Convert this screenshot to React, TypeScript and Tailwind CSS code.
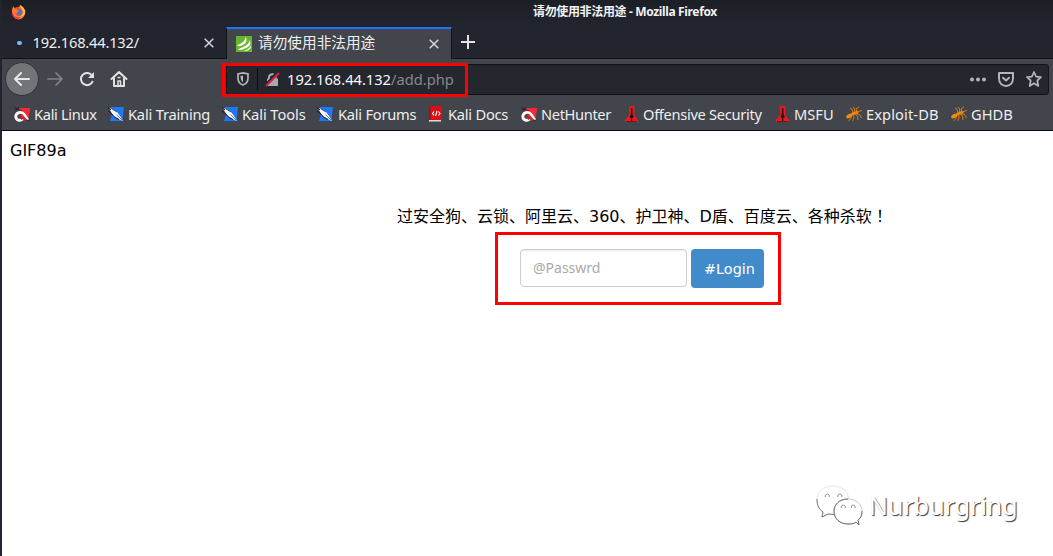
import type { ReactNode } from "react";

function KaliMark({ red = false }: { red?: boolean }) {
  return red ? (
    <svg width="16" height="16" viewBox="0 0 16 16" className="shrink-0">
      <path d="M5 2H16V4L14 14L5 5Z" fill="#f12a35" />
      <path d="M0 1L3 3L5 1M1 4L4 3M4 3L8 5" stroke="#20242b" strokeWidth="1" fill="none" />
      <path d="M14 14.3L10 8.3C7.5 4.8 1.8 6.3 1.8 10.6C1.8 14.4 6.3 15.2 8.8 13" fill="none" stroke="#fff" strokeWidth="2.8" />
      <path d="M5 10L8.5 13.2" stroke="#c51f2a" strokeWidth="2.2" />
      <path d="M7 8.5L12.5 14.5" stroke="#e22a37" strokeWidth="2" />
      <path d="M12 14.5L15.5 14" stroke="#20242b" strokeWidth="1" />
    </svg>
  ) : (
    <svg width="16" height="16" viewBox="0 0 16 16" className="shrink-0">
      <path d="M3 1H16L14.5 15H2L4 8Z" fill="#2277f3" />
      <path d="M1 2L4 3L9 6L12 10L15 15L10.5 13L6 10.5L3 6Z" fill="#f5f6f7" />
      <path d="M0 1.5L3 4M0 5L3.5 7.5L6.5 11L11 13.5" stroke="#15191e" strokeWidth="1" fill="none" />
      <path d="M8.5 8.5L14 14" stroke="#59616b" strokeWidth=".8" />
      <path d="M4 3L9 6" stroke="#15191e" strokeWidth=".6" />
    </svg>
  );
}

function DocsMark() {
  return (
    <svg width="13" height="16" viewBox="0 0 13 16" className="shrink-0">
      <path d="M0 0H13V14H0Z" fill="#d90f16" />
      <path d="M0 0H1.5V14H0Z" fill="#a80c12" />
      <path d="M0 14H12V15.5H0Z" fill="#e5d8d8" />
      <path d="M5 5.5L3.5 7.5L5 9.5M8 5L6.6 10M9.5 5.5L11 7.5L9.5 9.5" stroke="#fff" strokeWidth="1.1" fill="none" />
    </svg>
  );
}

function OffsecMark() {
  return (
    <svg width="13" height="16" viewBox="0 0 13 16" className="shrink-0">
      <path d="M4 0H9.5V9L13 14V16H0V14L4 9Z" fill="#e01c20" />
      <path d="M6 2H7.3L7.6 9L9 11L7.2 12V15H6V12L4.5 11L5.7 9Z" fill="#330a0a" />
      <path d="M1 15.5H12" stroke="#8d0c10" />
    </svg>
  );
}

function AntMark() {
  return (
    <svg width="16" height="16" viewBox="0 0 16 16" className="shrink-0" fill="none" stroke="#e9860f">
      <ellipse cx="3.3" cy="10" rx="3.4" ry="2" fill="#f08a10" stroke="none" transform="rotate(-28 3.3 10)" />
      <ellipse cx="7.5" cy="7.6" rx="2.6" ry="1.4" fill="#ef890e" stroke="none" transform="rotate(-24 7.5 7.6)" />
      <circle cx="10.7" cy="6.6" r="1.8" fill="#e9860f" stroke="none" />
      <path d="M11 6L10 3L13 .8M11.5 6L16 4.3M7 7L5.8 3L4 2M8 7L8.8 3L7 1M6 8L4.6 13L2.4 15M7.5 8L8 12L6.5 15M9 8L11.5 10L12 14M10.5 7.5L14 9L15.5 12" strokeWidth=".85" />
    </svg>
  );
}

function FirefoxMark() {
  return (
    <svg width="15" height="15" viewBox="0 0 15 15">
      <circle cx="7.5" cy="8" r="6.3" fill="#f9443d" />
      <path d="M1 6C1 3 2.2 2 2.5 1.3L4.2 4L7 4.5L4.5 8C4.5 10 6 11 8 11C11 11 12 8 11 5L8 3L9 0C12 1.5 14.7 5 14 9C13 12 11 14 7.5 14.4C3 14 .5 10 1 6Z" fill="#ff7a2a" />
      <path d="M8.8 0C9 3 12 3.4 12 7C12 9.5 10.5 11 8.8 11.5C12.5 12 14.5 9 14.2 6C13.5 3 11 1.3 8.8 0Z" fill="#ffc23e" />
      <circle cx="7.8" cy="7.2" r="3" fill="#4376c5" />
      <path d="M3 4.3L6.5 5L8 6L6.3 7L5.5 9L3.5 7Z" fill="#ff762c" />
      <path d="M1.3 8C2 12 5 13.5 8 13" stroke="#e82054" strokeWidth="1.3" fill="none" />
    </svg>
  );
}

function Cross() {
  return (
    <svg width="10" height="10" viewBox="0 0 10 10" className="shrink-0" stroke="#d7d7db" strokeWidth="1.5">
      <path d="M.7.7L9.3 9.3M9.3.7L.7 9.3" />
    </svg>
  );
}

function Bookmark({ icon, label, width, gap, tracking = "tracking-normal" }: { icon: ReactNode; label: string; width: string; gap: string; tracking?: string }) {
  return (
    <div className={`flex shrink-0 items-center ${width} ${gap}`}>
      {icon}
      <span className={`whitespace-nowrap ${tracking}`}>{label}</span>
    </div>
  );
}

function WechatMark() {
  return (
    <svg width="48" height="42" viewBox="0 0 48 42" fill="#fff" strokeWidth=".8">
      <path d="M17 1C7 1 1 7 1 15C1 21 3 24 7 27L6 32L12 29C15 30 19 30 23 29C31 27 34 21 33 14C32 6 25 1 17 1Z" stroke="#dedede" />
      <path d="M1 14C1 21 3 24 7 27L6 32L12 29L18 29.5" stroke="#555" fill="none" />
      <path d="M32 14C23 14 18 20 18 26C18 34 24 39 32 39C35 39 38 39 40 37L43 40L42 35C45 33 46 30 46 26C46 19 40 14 32 14Z" stroke="#bbb" />
      <path d="M32 14C23 14 18 20 18 26C18 34 24 39 32 39C35 39 38 39 40 37L43 40L42 35C45 33 46 30 46 26" stroke="#555" fill="none" />
      <path d="M9.5 12A2 2 0 1 1 13 12M22 12A2 2 0 1 1 25.5 12M25.5 23A2 2 0 1 1 29 23M35.5 23A2 2 0 1 1 39 23" stroke="#777" fill="none" />
    </svg>
  );
}

export default function App() {
  return (
    <div className="relative flex h-[556px] w-[1053px] flex-col overflow-hidden bg-[#22252e] pl-[2px] font-['Noto_Sans','Noto_Sans_CJK_SC',sans-serif]">
      <header className="flex h-[27px] shrink-0 items-start bg-linear-to-b from-[#1c1f26] to-[#22252e]">
        <div className="ml-[9px] mt-[5px] w-[522px]"><FirefoxMark /></div>
        <div className="mt-[3px] whitespace-nowrap text-[12px] leading-[17px] font-bold tracking-[-0.35px] text-[#f1f1f2]">请勿使用非法用途 - Mozilla Firefox</div>
      </header>

      <div className="flex h-8 shrink-0 border-b border-[#101218] text-[14.67px] text-[#eeeef0]">
        <div className="flex w-[224px] items-center pl-[15px]">
          <span className="h-1 w-[5px] rounded-full bg-[#75baff]" />
          <span className="-mt-[2px] ml-[10.5px] w-[171.5px] whitespace-nowrap tracking-[-0.2px]">192.168.44.132/</span>
          <Cross />
        </div>
        <div className="-mb-px flex w-[226px] items-center border-x border-t-2 border-x-[#101218] border-t-[#1e75ff] bg-[#42454b] pb-px pl-[9px]">
          <svg width="16" height="16" viewBox="0 0 16 16" className="shrink-0">
            <path d="M0 0H16V16H0Z" fill="#69b52d" />
            <path d="M1 9.5C5 7.5 9 6 9.5 1C12 4.5 10 8 6 9.5C4 10.2 2 10.5 1 9.5ZM2 13.2C7 11 13 9.5 13.5 4C16 8 13 11.5 8 13C5 14 3 14.5 2 13.2ZM7 15.2C11 14 13.5 12.5 15 9.5C15.5 13 12 15.5 7 15.2Z" fill="#fff" />
          </svg>
          <span className="-mt-[3px] ml-[6px] w-[171px] whitespace-nowrap">请勿使用非法用途</span>
          <Cross />
        </div>
        <div className="flex items-start pl-[9px] pt-2">
          <svg width="14" height="14" viewBox="0 0 14 14" stroke="#e5e5e6" strokeWidth="2"><path d="M7 0V14M0 7H14" /></svg>
        </div>
      </div>

      <nav className="flex h-[41px] shrink-0 items-center bg-[#42454b] pb-px pl-1">
        <div className="-ml-px flex size-[34px] shrink-0 items-center justify-center rounded-full border border-[#303238] bg-[#737477]">
          <svg width="16" height="14" viewBox="0 0 16 14" fill="none" stroke="#e7e7e8" strokeWidth="2" strokeLinecap="round" strokeLinejoin="round"><path d="M15 7H1M7 1L1 7L7 13" /></svg>
        </div>
        <svg width="16" height="14" viewBox="0 0 16 14" className="ml-2" fill="none" stroke="#808286" strokeWidth="1.7" strokeLinecap="round" strokeLinejoin="round"><path d="M1 7H15M9 1L15 7L9 13" /></svg>
        <svg width="16" height="16" viewBox="0 0 16 16" className="ml-4" fill="none" stroke="#e2e2e3" strokeWidth="2">
          <path d="M13.2 4.8A6.1 6.1 0 1 0 13.8 10" /><path d="M15 1V7H9Z" fill="#e2e2e3" stroke="none" />
        </svg>
        <svg width="18" height="18" viewBox="0 0 18 18" className="ml-[15px]" fill="none" stroke="#e2e2e3" strokeWidth="2" strokeLinejoin="round">
          <path d="M1.5 9L9 2L16.5 9M4 8V16H14V8" strokeLinecap="round" /><path d="M8 16V11H10.5V16" strokeWidth="1.5" /><path d="M7.5 7.5H10.5" strokeWidth="1.5" />
        </svg>
        <div className="ml-[98px] flex h-[31px] w-[823px] items-center rounded-[3px] border border-[#111319] bg-[#25272f] pl-[10px]">
          <svg width="12" height="14" viewBox="0 0 12 14" fill="none" stroke="#b5b5b9" strokeWidth="1.7" className="shrink-0"><path d="M6 .9L11 2V6C11 10 9 12 6 13C3 12 1 10 1 6V2Z" /><path d="M6 3.4V10.2C4.3 9 3.5 7.6 3.5 4Z" fill="#b5b5b9" stroke="none" /></svg>
          <span className="ml-2 h-[22px] w-px shrink-0 bg-[#0c0d12]" />
          <svg width="15" height="15" viewBox="0 0 15 15" className="ml-[7px] shrink-0">
            <path d="M4 7V5A3.3 3.3 0 0 1 10.5 5V7" fill="none" stroke="#aaa9ad" strokeWidth="2" />
            <path d="M2 6.5H13V14H2Z" fill="#aaa9ad" /><path d="M0 14L13 0" stroke="#25272f" strokeWidth="3" /><path d="M1 14L14 1" stroke="#e41b45" strokeWidth="1.8" />
          </svg>
          <div className="ml-[7px] whitespace-nowrap text-[14.67px] text-[#f8f8fa]">192.168.44.132<span className="text-[#87888c]">/add.php</span></div>
          <div className="ml-auto mr-[6px] flex items-center">
            <svg width="16" height="5" viewBox="0 0 16 5" fill="#b5b5b9"><circle cx="2" cy="2.5" r="2" /><circle cx="8" cy="2.5" r="2" /><circle cx="14" cy="2.5" r="2" /></svg>
            <svg width="16" height="15" viewBox="0 0 16 15" className="ml-3" fill="none" stroke="#b5b5b9" strokeWidth="2" strokeLinecap="round" strokeLinejoin="round"><path d="M1 1H15V6C15 11 12 14 8 14C4 14 1 11 1 6ZM5 5.7L8 8.5L11 5.7" /></svg>
            <svg width="16" height="16" viewBox="0 0 16 16" className="ml-3" fill="none" stroke="#b5b5b9" strokeWidth="1.7" strokeLinejoin="round"><path d="M8 1L10.1 5.6L15 6.1L11.3 9.5L12.3 15L8 12.2L3.7 15L4.7 9.5L1 6.1L5.9 5.6Z" /></svg>
          </div>
        </div>
      </nav>

      <div className="flex h-[31px] shrink-0 items-center border-b border-[#09070f] bg-[#42454b] pb-[2px] pl-3 text-[14.67px] text-[#eeeeef]">
        <Bookmark icon={<KaliMark red />} label="Kali Linux" width="w-[94px]" gap="gap-1" tracking="tracking-[-0.33px]" />
        <Bookmark icon={<KaliMark />} label="Kali Training" width="w-[114px]" gap="gap-1" tracking="tracking-[-0.2px]" />
        <Bookmark icon={<KaliMark />} label="Kali Tools" width="w-[95px]" gap="gap-1" tracking="tracking-[-0.06px]" />
        <Bookmark icon={<KaliMark />} label="Kali Forums" width="w-[112px]" gap="gap-[5px]" tracking="tracking-[-0.24px]" />
        <Bookmark icon={<DocsMark />} label="Kali Docs" width="w-[92px]" gap="gap-[6px]" tracking="tracking-[-0.24px]" />
        <Bookmark icon={<KaliMark red />} label="NetHunter" width="w-[104px]" gap="gap-1" tracking="tracking-[-0.38px]" />
        <Bookmark icon={<OffsecMark />} label="Offensive Security" width="w-[151px]" gap="gap-[5px]" tracking="tracking-[-0.31px]" />
        <Bookmark icon={<OffsecMark />} label="MSFU" width="w-[70px]" gap="gap-[5px]" />
        <Bookmark icon={<AntMark />} label="Exploit-DB" width="w-[105px]" gap="gap-1" tracking="tracking-[0.1px]" />
        <Bookmark icon={<AntMark />} label="GHDB" width="w-20" gap="gap-1" />
      </div>

      <main className="flex grow flex-col bg-white pt-[10px] font-['DejaVu_Sans','Noto_Sans_CJK_SC',sans-serif] text-black">
        <div className="ml-2 text-[16px] leading-[19px]">GIF89a</div>
        <div className="ml-[395px] mt-[45px] h-6 shrink-0 whitespace-nowrap text-[16px] leading-6">过安全狗、云锁、阿里云、360、护卫神、D盾、百度云、各种杀软<span className="font-['Noto_Sans_CJK_TC',sans-serif] leading-none" lang="zh-TW">！</span></div>
        <div className="ml-[493px] mt-[3px] flex h-[73px] w-[286px] shrink-0 items-start border-[3px] border-[#ff0000] pl-[22px] pt-[14px]">
          <input aria-label="Password" placeholder="@Passwrd" className="h-[38px] w-[167px] rounded-[4px] border border-[#ccc] px-3 pb-[2px] font-['Noto_Sans',sans-serif] text-[14px] shadow-[inset_0_1px_1px_rgba(0,0,0,0.075)] outline-none placeholder:text-[#aaa]" />
          <button className="ml-1 h-[39px] w-[73px] rounded-[4px] bg-[#428bca] pl-1 pt-[2px] text-[14.4px] text-white">#Login</button>
        </div>
        <div className="ml-[814px] mt-[180px] flex items-start">
          <WechatMark />
          <span className="ml-[5px] mt-[2px] font-['Noto_Sans',sans-serif] text-[25px] leading-[36px] text-white [text-shadow:1px_1px_1px_#333]">Nurburgring</span>
        </div>
      </main>

      <div className="pointer-events-none absolute left-[222px] top-[63px] h-[34px] w-[246px] border-[3px] border-[#ff0000]" />
    </div>
  );
}
